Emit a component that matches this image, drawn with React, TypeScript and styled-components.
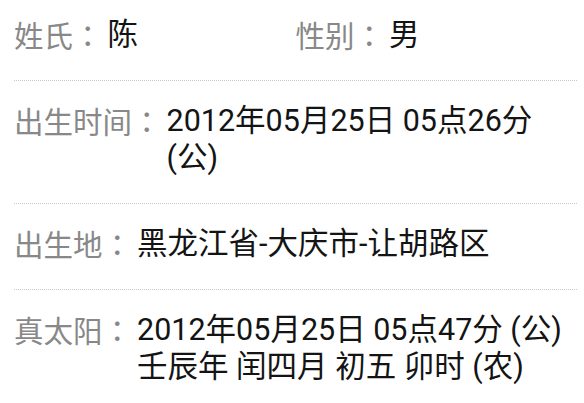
import React from "react";
import styled, { createGlobalStyle } from "styled-components";

const Global = createGlobalStyle`
  html, body {
    margin: 0;
    padding: 0;
    background: #ffffff;
    overflow: hidden;
  }
  body {
    font-family: "Roboto", "Noto Sans CJK SC", sans-serif;
  }
`;

const Sheet = styled.div`
  width: 584px;
  box-sizing: border-box;
  padding: 0 7px 0 14px;
  background: #ffffff;
`;

const Row = styled.div<{ $first?: boolean; $last?: boolean; $split?: boolean }>`
  display: grid;
  grid-template-columns: ${(p) => (p.$split ? "1fr 1fr" : "1fr")};
  padding: ${(p) => (p.$first ? 16 : 21)}px 0 ${(p) => (p.$last ? 12 : 27)}px;
  border-bottom: ${(p) => (p.$last ? "none" : "1px dotted #c8c8c8")};
`;

const Field = styled.div`
  display: flex;
  align-items: flex-start;
  min-width: 0;
`;

const Label = styled.span`
  flex: none;
  margin-right: 5px;
  font-family: "Noto Sans CJK SC", sans-serif;
  font-size: 29.5px;
  line-height: 37px;
  color: #888888;
  white-space: nowrap;
`;

const Colon = styled.span`
  font-family: "Noto Sans CJK TC", "Noto Sans CJK SC", sans-serif;
`;

const Value = styled.div`
  flex: 1;
  min-width: 0;
  font-family: "Roboto", "Noto Sans CJK SC", sans-serif;
  font-size: 30.5px;
  line-height: 37px;
  color: #141414;
`;

const Line = styled.span`
  display: block;
`;

function Caption({ text }: { text: string }) {
  return (
    <Label>
      {text}
      <Colon>：</Colon>
    </Label>
  );
}

export default function App() {
  return (
    <>
      <Global />
      <Sheet>
        <Row $first $split>
          <Field>
            <Caption text="姓氏" />
            <Value>陈</Value>
          </Field>
          <Field>
            <Caption text="性别" />
            <Value>男</Value>
          </Field>
        </Row>
        <Row>
          <Field>
            <Caption text="出生时间" />
            <Value>2012年05月25日 05点26分 (公)</Value>
          </Field>
        </Row>
        <Row>
          <Field>
            <Caption text="出生地" />
            <Value>黑龙江省-大庆市-让胡路区</Value>
          </Field>
        </Row>
        <Row $last>
          <Field>
            <Caption text="真太阳" />
            <Value>
              <Line>2012年05月25日 05点47分 (公)</Line>
              <Line>壬辰年 闰四月 初五 卯时 (农)</Line>
            </Value>
          </Field>
        </Row>
      </Sheet>
    </>
  );
}
